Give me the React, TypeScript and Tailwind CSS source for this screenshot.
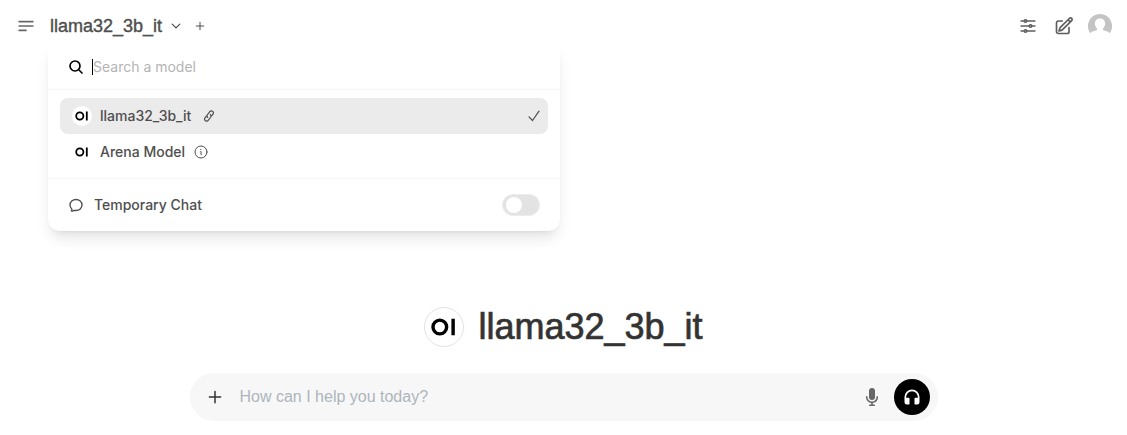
import { ComponentProps, useState } from "react";
import clsx from "clsx";
import {
	HiOutlineAdjustmentsHorizontal,
	HiOutlineBars3BottomLeft,
	HiOutlineChatBubbleOvalLeft,
	HiOutlineChevronDown,
	HiOutlineInformationCircle,
	HiOutlineMagnifyingGlass,
	HiOutlinePencilSquare,
	HiOutlinePlus,
} from "react-icons/hi2";

const MODELS = [
	{ name: "llama32_3b_it", external: true },
	{ name: "Arena Model", external: false },
];

export default function App() {
	const [selected, setSelected] = useState(MODELS[0].name);

	return (
		<div className="flex min-h-screen flex-col bg-white font-['Liberation_Sans',Arial,sans-serif] text-[#4e4e4e]">
			<header className="flex h-[52px] items-center justify-between pr-[15px] pl-4">
				<div className="relative flex items-center">
					<button aria-label="Toggle sidebar" className="text-[#676767]">
						<HiOutlineBars3BottomLeft className="size-5" strokeWidth={2} />
					</button>
					<button className="ml-3.5 flex items-center text-lg font-normal [-webkit-text-stroke:0.4px]">
						{selected}
						<HiOutlineChevronDown className="ml-2 size-3" strokeWidth={2.5} />
					</button>
					<button aria-label="Add model" className="ml-3">
						<HiOutlinePlus className="size-3" strokeWidth={2} />
					</button>
					<ModelMenu selected={selected} onSelect={setSelected} />
				</div>
				<div className="flex items-center gap-4 text-[#5d5d5d]">
					<button aria-label="Controls">
						<HiOutlineAdjustmentsHorizontal className="size-5" strokeWidth={2} />
					</button>
					<button aria-label="New chat">
						<HiOutlinePencilSquare className="size-5" strokeWidth={2} />
					</button>
					<button aria-label="User menu" className="-ml-0.5">
						<Avatar className="size-6" />
					</button>
				</div>
			</header>

			<main className="flex flex-1 flex-col items-center justify-end px-2.5 pb-3.5">
				<div className="mb-[26px] flex items-center gap-3.5">
					<Logo className="size-10 rounded-full border border-[#e3e3e3] bg-white" />
					<h1 className="text-4xl text-[#333333] [-webkit-text-stroke:0.7px]">
						{selected}
					</h1>
				</div>
				<form className="flex h-12 w-full max-w-[748px] items-center rounded-full bg-[#f7f7f7] pr-2 pl-4">
					<button type="button" aria-label="More" className="text-[#333333]">
						<HiOutlinePlus className="size-[18px]" strokeWidth={2} />
					</button>
					<input
						aria-label="Message"
						placeholder="How can I help you today?"
						className="ml-4 min-w-0 flex-1 bg-transparent text-base outline-none placeholder:text-[#adb5bd]"
					/>
					<button type="button" aria-label="Record voice" className="text-[#676767]">
						<MicIcon className="size-5" />
					</button>
					<button
						type="button"
						aria-label="Call"
						className="ml-3 flex size-9 items-center justify-center rounded-full bg-black text-white"
					>
						<HeadphoneIcon className="size-5" />
					</button>
				</form>
			</main>
		</div>
	);
}

interface ModelMenuProps {
	selected: string;
	onSelect: (name: string) => void;
}

const ModelMenu = ({ selected, onSelect }: ModelMenuProps) => {
	const [temporary, setTemporary] = useState(false);

	return (
		<div className="absolute top-[30px] left-8 z-10 w-lg max-w-[calc(100vw-64px)] rounded-xl bg-white font-['Inter',sans-serif] text-sm shadow-lg">
			<label className="flex h-12 items-center border-b border-[#f5f5f5] px-5 pt-0.5">
				<HiOutlineMagnifyingGlass
					className="size-4 text-black"
					strokeWidth={2.5}
				/>
				<span className="ml-2 h-4 w-px bg-black" />
				<input
					aria-label="Search a model"
					placeholder="Search a model"
					className="min-w-0 flex-1 bg-transparent caret-black outline-none placeholder:text-[#b4b4b4]"
				/>
			</label>
			<div className="border-b border-[#f5f5f5] px-3 py-2">
				{MODELS.map((model) => (
					<button
						key={model.name}
						onClick={() => onSelect(model.name)}
						className={clsx(
							"flex h-9 w-full items-center rounded-lg pr-2 pl-3 font-medium",
							model.name === selected && "bg-[#ebebeb]",
						)}
					>
						<Logo className="size-5 rounded-full bg-white" />
						<span className="mr-2 ml-2">{model.name}</span>
						{model.external ? (
							<LinkIcon className="ml-1 size-3" />
						) : (
							<HiOutlineInformationCircle className="size-4" />
						)}
						{model.name === selected && (
							<CheckIcon className="ml-auto size-3" />
						)}
					</button>
				))}
			</div>
			<div className="flex h-[52px] items-center px-5 font-medium">
				<HiOutlineChatBubbleOvalLeft className="size-4" strokeWidth={2} />
				<span id="temporary-chat" className="ml-2.5">
					Temporary Chat
				</span>
				<button
					role="switch"
					aria-checked={temporary}
					aria-labelledby="temporary-chat"
					onClick={() => setTemporary(!temporary)}
					className={clsx(
						"ml-auto flex h-[22px] w-[38px] items-center rounded-full border border-[#ececec] px-[3px]",
						temporary ? "justify-end bg-emerald-600" : "bg-[#e3e3e3]",
					)}
				>
					<span className="size-4 rounded-full bg-white" />
				</button>
			</div>
		</div>
	);
};

const Logo = (props: ComponentProps<"svg">) => (
	<svg viewBox="0 0 40 40" fill="none" {...props}>
		<circle cx="15.6" cy="20" r="7.2" stroke="#000" strokeWidth="3.6" />
		<path d="M29.6 11.2v17.6" stroke="#000" strokeWidth="3.6" />
	</svg>
);

const LinkIcon = (props: ComponentProps<"svg">) => (
	<svg
		viewBox="0 0 16 16"
		fill="none"
		stroke="currentColor"
		strokeWidth="1.6"
		strokeLinecap="round"
		{...props}
	>
		<path d="M6.3 9.9c-1.3-.9-1.3-2.4-.2-3.9l2.700-3.500c1.100-1.400 2.800-1.600 4-.7s1.400 2.500.3 4l-1.600 2.100" />
		<path d="M9.7 6.1c1.300.9 1.300 2.400.2 3.900l-2.700 3.500c-1.100 1.400-2.800 1.600-4 .7s-1.400-2.500-.3-4l1.600-2.100" />
	</svg>
);

const CheckIcon = (props: ComponentProps<"svg">) => (
	<svg viewBox="0 0 12 12" fill="none" stroke="currentColor" {...props}>
		<path
			d="M1 6.800 4.500 10.500 11 1.200"
			strokeWidth="1.2"
			strokeLinecap="round"
			strokeLinejoin="round"
		/>
	</svg>
);

const Avatar = (props: ComponentProps<"svg">) => (
	<svg viewBox="0 0 24 24" {...props}>
		<path
			d="M12 0a12 12 0 0 0-9.600 19.200c1.300-1.500 3.900-2.100 6.600-3.100v-1.700C7.700 13.300 6.900 11.500 6.900 9.500 6.900 6.400 9 4.400 12 4.400s5.100 2 5.100 5.100c0 2-.8 3.800-2.100 4.900v1.700c2.700 1 5.300 1.600 6.600 3.100A12 12 0 0 0 12 0Z"
			fill="#c4c4c4"
		/>
	</svg>
);

const MicIcon = (props: ComponentProps<"svg">) => (
	<svg viewBox="0 0 20 20" fill="currentColor" {...props}>
		<path d="M7 4a3 3 0 0 1 6 0v6a3 3 0 1 1-6 0V4Z" />
		<path d="M5.500 9.643a.75.75 0 0 0-1.500 0V10c0 3.060 2.290 5.585 5.250 5.954V17.500h-1.500a.75.75 0 0 0 0 1.500h4.500a.75.75 0 0 0 0-1.500h-1.500v-1.546A6.001 6.001 0 0 0 16 10v-.357a.75.75 0 0 0-1.500 0V10a4.500 4.500 0 0 1-9 0v-.357Z" />
	</svg>
);

const HeadphoneIcon = (props: ComponentProps<"svg">) => (
	<svg viewBox="0 0 24 24" fill="currentColor" {...props}>
		<path d="M12 5a7 7 0 0 0-7 7v1.170c.313-.11.65-.17 1-.17h2a1 1 0 0 1 1 1v6a1 1 0 0 1-1 1H6a3 3 0 0 1-3-3v-6a9 9 0 0 1 18 0v6a3 3 0 0 1-3 3h-2a1 1 0 0 1-1-1v-6a1 1 0 0 1 1-1h2c.35 0 .687.06 1 .17V12a7 7 0 0 0-7-7Z" />
	</svg>
);
